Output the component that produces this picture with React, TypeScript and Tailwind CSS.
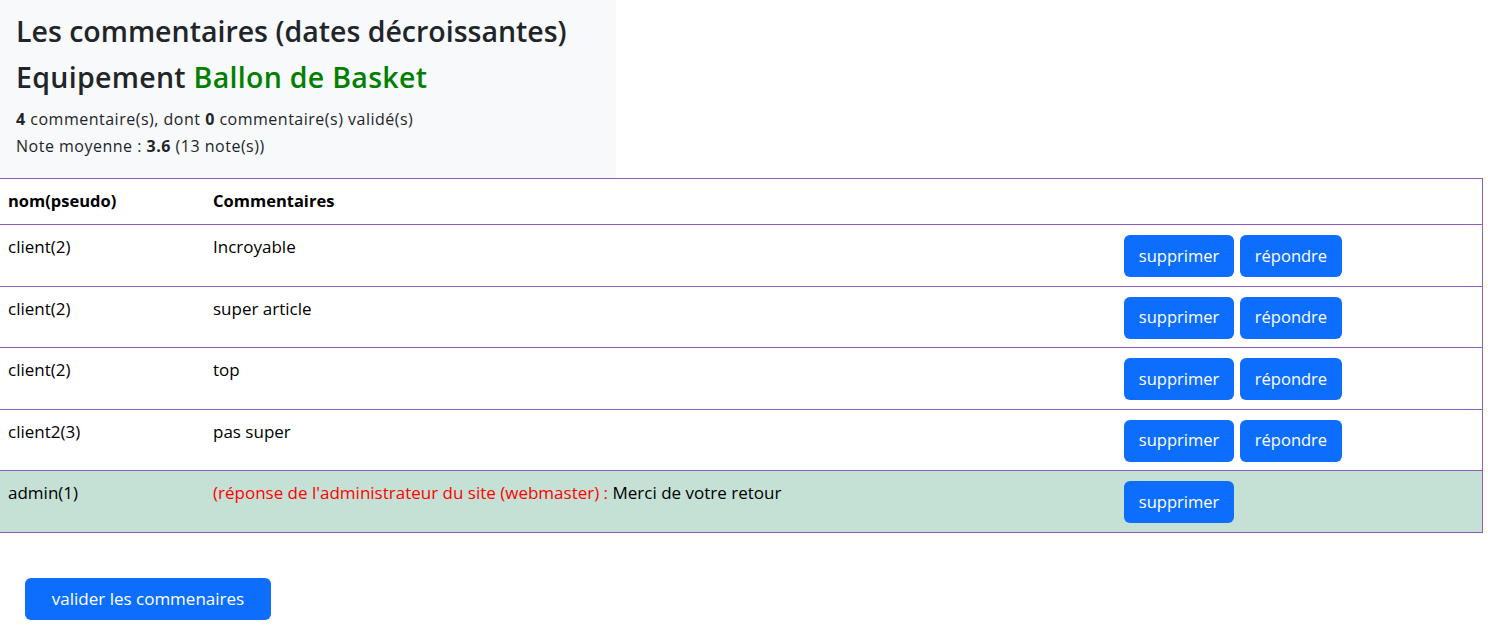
import React from "react";

type Comment = {
  author: string;
  text: string;
  admin?: boolean;
};

const comments: Comment[] = [
  { author: "client(2)", text: "Incroyable" },
  { author: "client(2)", text: "super article" },
  { author: "client(2)", text: "top" },
  { author: "client2(3)", text: "pas super" },
  { author: "admin(1)", text: "Merci de votre retour", admin: true },
];

const font = { fontFamily: '"Open Sans", "Noto Sans", sans-serif' };

export default function App() {
  return (
    <div className="min-h-screen bg-white text-[#212529]" style={font}>
      <div className="w-[616px] bg-[#f8f9fa] px-4 pt-[12px] h-[178px]">
        <h2 className="text-[28.5px] font-semibold leading-[38px] mb-[8px]">
          Les commentaires (dates décroissantes)
        </h2>
        <h2 className="text-[28.5px] font-semibold leading-[38px] mb-[10px] tracking-[0.3px]">
          Equipement <span className="text-[#008000]">Ballon de Basket</span>
        </h2>
        <p className="text-[16px] leading-[27px] tracking-[0.5px]">
          <b>4</b> commentaire(s), dont <b>0</b> commentaire(s) validé(s)
        </p>
        <p className="text-[16px] leading-[27px] tracking-[0.5px]">
          Note moyenne : <b>3.6</b> (13 note(s))
        </p>
      </div>

      <table className="w-[1483px] border-collapse text-[17px] text-black">
        <thead>
          <tr className="h-[46px] border-y border-r border-[#8e5cbf]">
            <th className="w-[205px] px-2 text-left text-[16.5px] font-bold">nom(pseudo)</th>
            <th className="w-[911px] px-2 text-left text-[16.5px] font-bold">Commentaires</th>
            <th className="px-2"></th>
          </tr>
        </thead>
        <tbody>
          {comments.map((c, index) => (
            <tr
              key={index}
              className={
                "h-[61.5px] border-b border-r border-[#8e5cbf] align-top " +
                (c.admin ? "bg-[#c5e0d5]" : "bg-white")
              }
            >
              <td className="px-2 pt-[10px] leading-[24px]">{c.author}</td>
              <td className="px-2 pt-[10px] leading-[24px]">
                {c.admin && (
                  <span className="text-[#ff0000]">
                    (réponse de l'administrateur du site (webmaster) :{" "}
                  </span>
                )}
                {c.text}
              </td>
              <td className="px-2 pt-[10px]">
                <div className="flex gap-[6px]">
                  <button className="h-[42px] w-[110px] rounded-[6px] bg-[#0d6efd] text-[16.5px] text-white">
                    supprimer
                  </button>
                  {!c.admin && (
                    <button className="h-[42px] w-[102px] rounded-[6px] bg-[#0d6efd] text-[16.5px] text-white">
                      répondre
                    </button>
                  )}
                </div>
              </td>
            </tr>
          ))}
        </tbody>
      </table>

      <div className="pl-[25px] pt-[45px]">
        <button className="h-[42px] w-[246px] rounded-[6px] bg-[#0d6efd] text-[17px] text-white">
          valider les commenaires
        </button>
      </div>
    </div>
  );
}
